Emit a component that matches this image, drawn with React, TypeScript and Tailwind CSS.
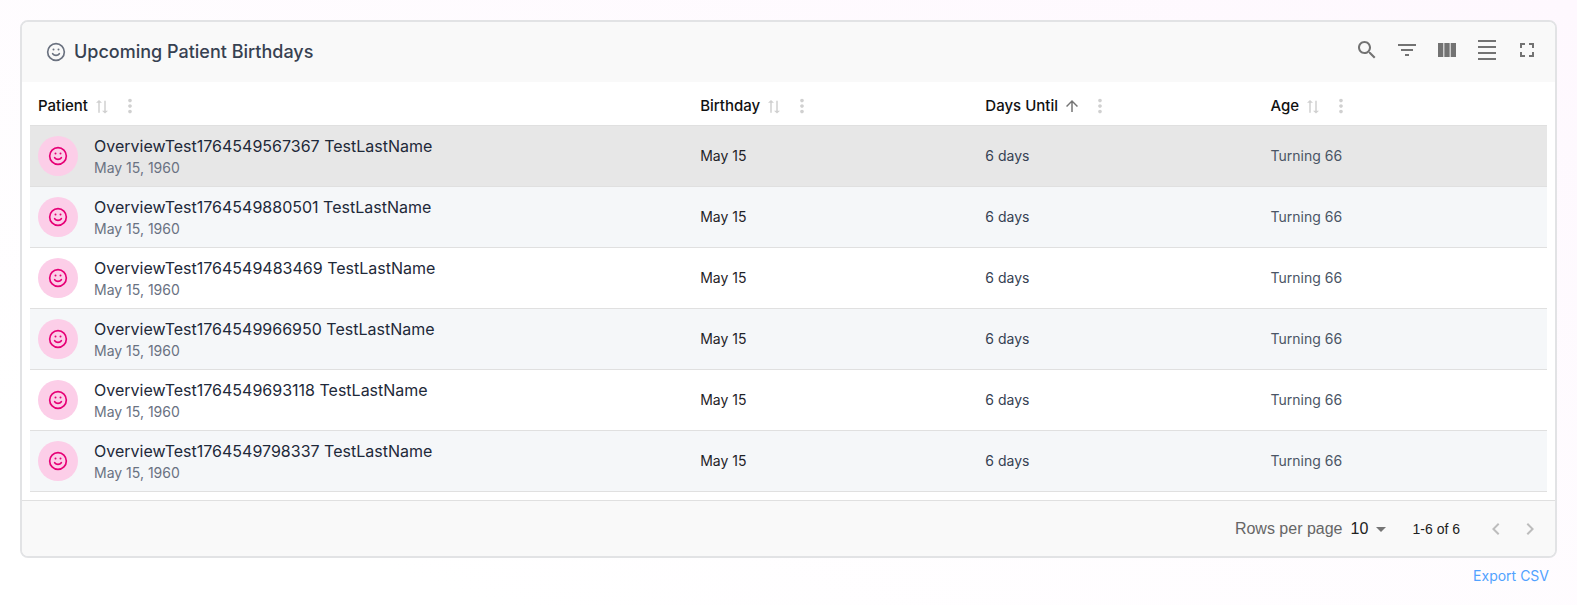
import React from 'react';

const patients = [
  { id: '1764549567367', dob: 'May 15, 1960' },
  { id: '1764549880501', dob: 'May 15, 1960' },
  { id: '1764549483469', dob: 'May 15, 1960' },
  { id: '1764549966950', dob: 'May 15, 1960' },
  { id: '1764549693118', dob: 'May 15, 1960' },
  { id: '1764549798337', dob: 'May 15, 1960' },
];

const columns = [
  { label: 'Patient', width: 'w-[43.65%]' },
  { label: 'Birthday', width: 'w-[18.8%]' },
  { label: 'Days Until', width: 'w-[18.8%]', sorted: true },
  { label: 'Age', width: 'w-[18.75%]' },
];

const tools = [
  { label: 'Show/Hide search', d: 'M15.5 14h-.79l-.28-.27C15.41 12.59 16 11.11 16 9.5 16 5.91 13.09 3 9.5 3S3 5.91 3 9.5 5.91 16 9.5 16c1.61 0 3.09-.59 4.23-1.57l.27.28v.79l5 4.99L20.49 19zm-6 0C7.01 14 5 11.99 5 9.5S7.01 5 9.5 5 14 7.01 14 9.5 11.99 14 9.5 14' },
  { label: 'Show/Hide filters', d: 'M10 18h4v-2h-4zM3 6v2h18V6zm3 7h12v-2H6z' },
  { label: 'Show/Hide columns', d: 'M14.67 5v14H9.33V5zm1 14H21V5h-5.33zm-7.34 0V5H3v14z' },
  { label: 'Toggle density', d: 'M3 2h18v2H3zm0 18h18v2H3zm0-6h18v2H3zm0-6h18v2H3z' },
  { label: 'Toggle full screen', d: 'M7 14H5v5h5v-2H7zm-2-4h2V7h3V5H5zm12 7h-3v2h5v-5h-2zM14 5v2h3v3h2V5z' },
];

function Icon({ d, className }: { d: string; className: string }) {
  return (
    <svg viewBox="0 0 24 24" fill="currentColor" className={className} aria-hidden="true">
      <path d={d} />
    </svg>
  );
}

function SortArrows() {
  return (
    <svg viewBox="0 0 24 24" fill="currentColor" className="size-[18px] text-[#d0d0d0]" aria-hidden="true">
      <path
        transform="translate(12 13) rotate(-90) scale(0.9 1) translate(-12 -12)"
        d="m18 12 4-4-4-4v3H3v2h15zM6 12l-4 4 4 4v-3h15v-2H6z"
      />
    </svg>
  );
}

function Smile({ className }: { className: string }) {
  return (
    <svg viewBox="0 0 24 24" fill="none" stroke="currentColor" strokeWidth={2} strokeLinecap="round" strokeLinejoin="round" className={className} aria-hidden="true">
      <circle cx="12" cy="12" r="10" />
      <path d="M8 14s1.5 2 4 2 4-2 4-2" />
      <path d="M9 9h.01M15 9h.01" strokeWidth={2.4} />
    </svg>
  );
}

export default function App() {
  return (
    <main className="min-h-screen bg-linear-to-tr from-white from-15% to-[#fef8fe] p-5 font-['Inter',sans-serif]">
      <section className="overflow-hidden rounded-lg border-2 border-[#e2e3e5] bg-white">
        <header className="flex h-15 items-center justify-between bg-[#f9f9f9] pr-2 pl-6">
          <h2 className="flex items-center gap-2 text-lg font-medium text-[#374151]">
            <Smile className="size-5 text-[#6b7280]" />
            Upcoming Patient Birthdays
          </h2>
          <div className="flex pb-1">
            {tools.map((tool) => (
              <button key={tool.label} aria-label={tool.label} className="p-2 text-[#737373]">
                <Icon d={tool.d} className="size-6" />
              </button>
            ))}
          </div>
        </header>

        <div className="p-2 pt-0">
          <table className="w-full table-fixed border-collapse text-left">
            <thead>
              <tr className="h-[43px] border-b border-[#e0e0e0]">
                {columns.map((col) => (
                  <th key={col.label} className={`px-2 pt-1.5 text-[15px] font-medium text-[#111111] ${col.width}`}>
                    <div className="flex items-center">
                      {col.label}
                      <button aria-label={`Sort by ${col.label}`} className="ml-[5px]">
                        {col.sorted ? (
                          <Icon d="m4 12 1.41 1.41L11 7.83V20h2V7.83l5.58 5.59L20 12l-8-8z" className="size-[18px] text-[#757575]" />
                        ) : (
                          <SortArrows />
                        )}
                      </button>
                      <button aria-label={`${col.label} actions`} className="ml-2 text-[#d0d0d0]">
                        <Icon d="M12 8c1.1 0 2-.9 2-2s-.9-2-2-2-2 .9-2 2 .9 2 2 2m0 2c-1.1 0-2 .9-2 2s.9 2 2 2 2-.9 2-2-.9-2-2-2m0 6c-1.1 0-2 .9-2 2s.9 2 2 2 2-.9 2-2-.9-2-2-2" className="size-[22px]" />
                      </button>
                    </div>
                  </th>
                ))}
              </tr>
            </thead>
            <tbody>
              {patients.map((p, i) => (
                <tr key={p.id} className={`h-[61px] border-b border-[#e0e0e0] text-sm ${i === 0 ? 'bg-[#e7e7e7]' : i % 2 ? 'bg-[#f5f7f9]' : 'bg-white'}`}>
                  <td className="px-2">
                    <div className="flex items-center gap-4">
                      <span className="flex size-10 items-center justify-center rounded-full bg-[#fccee8] text-[#e60076]">
                        <Smile className="size-5" />
                      </span>
                      <div>
                        <p className="text-base leading-6 text-[#1e2939]">OverviewTest{p.id} TestLastName</p>
                        <p className="leading-5 text-[#6a7282]">{p.dob}</p>
                      </div>
                    </div>
                  </td>
                  <td className="px-2 text-[#1f2328]">May 15</td>
                  <td className="px-2 text-[#364153]">6 days</td>
                  <td className="px-2 text-[#4a5565]">Turning 66</td>
                </tr>
              ))}
            </tbody>
          </table>
        </div>

        <footer className="flex h-14 items-center justify-end border-t border-[#e0e0e0] bg-[#f9f9f9] pt-0.5 pr-[9px] font-['Liberation_Sans',sans-serif]">
          <label htmlFor="page-size" className="text-base text-[#666666]">Rows per page</label>
          <div className="relative ml-2 flex items-center">
            <select id="page-size" defaultValue="10" className="w-[42px] appearance-none bg-transparent text-base text-[#212121]">
              <option>10</option>
            </select>
            <Icon d="m7 10 5 5 5-5z" className="pointer-events-none absolute right-0 size-6 text-[#757575]" />
          </div>
          <span className="mx-5 text-sm text-[#212121]">1-6 of 6</span>
          <div className="flex gap-0.5">
            <button aria-label="Previous page" disabled className="p-1 text-[#bdbdbd]">
              <Icon d="M15.41 7.41 14 6l-6 6 6 6 1.41-1.41L10.83 12z" className="size-6" />
            </button>
            <button aria-label="Next page" disabled className="p-1 text-[#bdbdbd]">
              <Icon d="M10 6 8.59 7.41 13.17 12l-4.58 4.59L10 18l6-6z" className="size-6" />
            </button>
          </div>
        </footer>
      </section>
      <div className="flex justify-end px-2 pt-2">
        <a href="#export" className="text-sm text-[#51a2ff]">Export CSV</a>
      </div>
    </main>
  );
}
